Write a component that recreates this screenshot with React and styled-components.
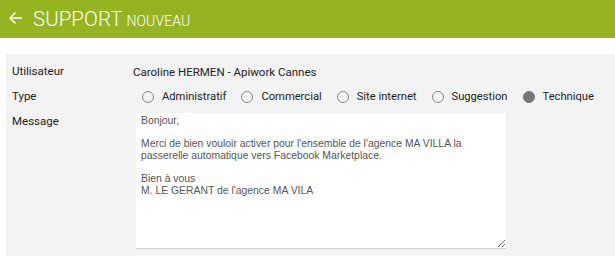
import React from 'react';
import styled, { createGlobalStyle } from 'styled-components';

const GlobalStyle = createGlobalStyle`
    body {
        margin: 0;
        background: #ffffff;
        font-family: Roboto, "Liberation Sans", sans-serif;
    }
`;

const Header = styled.header`
    height: 38px;
    background-color: #95b422;
    color: #ffffff;
    display: flex;
    align-items: center;
    padding-left: 8px;
    gap: 10px;
`;

const BackArrow = styled.svg`
    width: 15px;
    height: 14px;
    margin-bottom: 2px;
`;

const Title = styled.h1`
    margin: 0;
    font-weight: 300;
    font-size: 20.4px;
    letter-spacing: 0.1px;

    small {
        font-size: 14px;
        margin-left: 4px;
    }
`;

const Panel = styled.section`
    margin: 16px 0 0 6px;
    background-color: #f3f3f3;
    padding: 5px 6px 8px 6px;
    display: grid;
    grid-template-columns: 121px 1fr;
    color: #222;
    font-size: 11.5px;
`;

const Label = styled.div`
    height: 25px;
    line-height: 25px;
`;

const Value = styled.div`
    height: 25px;
    display: flex;
    align-items: center;
`;

const RadioGroup = styled.div`
    display: flex;
    align-items: center;
    gap: 15px;
    padding-left: 9px;
    height: 25px;
`;

const Radio = styled.label`
    display: flex;
    align-items: center;
    gap: 8px;
    font-size: 11.2px;
    color: #222;
`;

const Dot = styled.span`
    width: 10px;
    height: 10px;
    border-radius: 50%;
    border: 1px solid ${props => (props.$checked ? '#777' : '#888')};
    background: ${props => (props.$checked ? '#777' : 'transparent')};
    display: inline-block;
`;

const MessageBox = styled.textarea`
    display: block;
    margin: 4px 0 0 3px;
    width: 370px;
    height: 136px;
    box-sizing: border-box;
    border: none;
    border-bottom: 1px solid #d2d2d2;
    background: #ffffff;
    padding: 2px 5px;
    font-family: "Liberation Sans", Arial, sans-serif;
    font-size: 10.4px;
    line-height: 11.6px;
    color: #555;
    resize: both;
    outline: none;
`;

const types = ['Administratif', 'Commercial', 'Site internet', 'Suggestion', 'Technique'];

const message = `Bonjour,

Merci de bien vouloir activer pour l'ensemble de l'agence MA VILLA la passerelle automatique vers Facebook Marketplace.

Bien à vous
M. LE GERANT de l'agence MA VILA`;

export default function App() {
    return (
        <>
            <GlobalStyle />
            <Header>
                <BackArrow viewBox="0 0 15 14" fill="none" stroke="#fff" strokeWidth="1.6">
                    <path d="M14 7H2M7.5 1.5L2 7l5.5 5.5" />
                </BackArrow>
                <Title>
                    SUPPORT<small>NOUVEAU</small>
                </Title>
            </Header>
            <Panel>
                <Label>Utilisateur</Label>
                <Value>Caroline HERMEN - Apiwork Cannes</Value>
                <Label>Type</Label>
                <RadioGroup>
                    {types.map(t => (
                        <Radio key={t}>
                            <Dot $checked={t === 'Technique'} />
                            {t}
                        </Radio>
                    ))}
                </RadioGroup>
                <Label>Message</Label>
                <div>
                    <MessageBox defaultValue={message} />
                </div>
            </Panel>
        </>
    );
}
